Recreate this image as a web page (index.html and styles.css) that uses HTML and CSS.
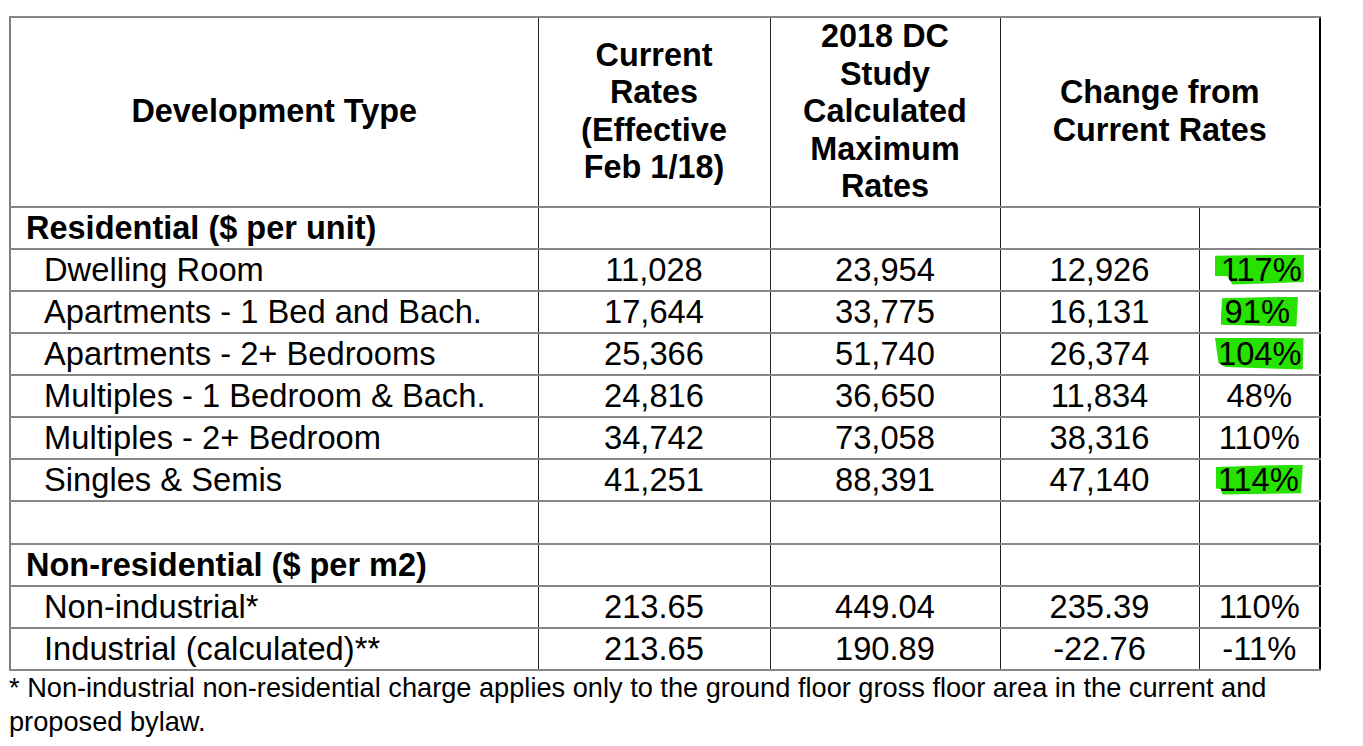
FILE: index.html
```html
<!DOCTYPE html>
<html lang="en">
<head>
<meta charset="utf-8">
<title>DC Rates</title>
<link rel="stylesheet" href="styles.css">
</head>
<body>
<div class="page">
  <table class="rates">
    <colgroup>
      <col class="c1"><col class="c2"><col class="c3"><col class="c4"><col class="c5">
    </colgroup>
    <tr class="hd">
      <th>Development Type</th>
      <th>Current<br>Rates<br>(Effective<br>Feb 1/18)</th>
      <th>2018 DC<br>Study<br>Calculated<br>Maximum<br>Rates</th>
      <th colspan="2">Change from<br>Current Rates</th>
    </tr>
    <tr class="sec">
      <td class="lbl">Residential ($ per unit)</td><td></td><td></td><td></td><td></td>
    </tr>
    <tr>
      <td class="item">Dwelling Room</td><td>11,028</td><td>23,954</td><td>12,926</td><td><span class="hl hl1">117%</span></td>
    </tr>
    <tr>
      <td class="item">Apartments - 1 Bed and Bach.</td><td>17,644</td><td>33,775</td><td>16,131</td><td><span class="hl hl2">91%</span></td>
    </tr>
    <tr>
      <td class="item">Apartments - 2+ Bedrooms</td><td>25,366</td><td>51,740</td><td>26,374</td><td><span class="hl hl3">104%</span></td>
    </tr>
    <tr>
      <td class="item">Multiples - 1 Bedroom &amp; Bach.</td><td>24,816</td><td>36,650</td><td>11,834</td><td>48%</td>
    </tr>
    <tr>
      <td class="item">Multiples - 2+ Bedroom</td><td>34,742</td><td>73,058</td><td>38,316</td><td>110%</td>
    </tr>
    <tr>
      <td class="item">Singles &amp; Semis</td><td>41,251</td><td>88,391</td><td>47,140</td><td><span class="hl hl4">114%</span></td>
    </tr>
    <tr class="blank">
      <td></td><td></td><td></td><td></td><td></td>
    </tr>
    <tr class="sec">
      <td class="lbl">Non-residential ($ per m2)</td><td></td><td></td><td></td><td></td>
    </tr>
    <tr>
      <td class="item">Non-industrial*</td><td>213.65</td><td>449.04</td><td>235.39</td><td>110%</td>
    </tr>
    <tr>
      <td class="item">Industrial (calculated)**</td><td>213.65</td><td>190.89</td><td>-22.76</td><td>-11%</td>
    </tr>
  </table>
  <p class="note">* Non-industrial non-residential charge applies only to the ground floor gross floor area in the current and proposed bylaw.</p>
</div>
</body>
</html>
```
FILE: styles.css
```css
html, body {
  margin: 0;
  background: #ffffff;
}
body {
  font-family: "Liberation Sans", Arial, sans-serif;
  color: #000;
}
.page {
  padding: 16px 0 0 9px;
  width: 1320px;
}
.rates {
  border-collapse: collapse;
  table-layout: fixed;
  width: 1310px;
  font-size: 32.7px;
  border-left: 2px solid #7d7d7d;
  border-right: 2px solid #000;
}
.c1 { width: 528px; }
.c2 { width: 232px; }
.c3 { width: 230px; }
.c4 { width: 199px; }
.c5 { width: 121px; }
.rates th,
.rates td {
  padding: 0;
  border-top: 2px solid #868686;
  border-bottom: 2px solid #868686;
  border-left: 1px solid #222;
  border-right: 1px solid #222;
  text-align: center;
  vertical-align: middle;
  white-space: nowrap;
}
.rates th {
  font-weight: bold;
  font-size: 32.4px;
  line-height: 37.5px;
  height: 187px;
}
.rates td {
  height: 40px;
  line-height: 40px;
}
.rates .lbl {
  text-align: left;
  font-weight: bold;
  font-size: 32.5px;
  padding-left: 15px;
}
.rates .item {
  text-align: left;
  padding-left: 33px;
}
.rates .blank td {
  height: 41px;
}
.hl {
  display: inline-block;
  background: #27e100;
  line-height: 30px;
  padding: 0 3px;
}
.hl1 {
  padding: 0 2px 0 6px;
  clip-path: polygon(0 4%, 100% 0, 100% 92%, 20% 100%, 14% 72%, 0 72%);
}
.hl2 {
  padding: 0 8px 0 4px;
  clip-path: polygon(2% 6%, 100% 0, 98% 100%, 0 94%);
}
.hl3 {
  padding: 1px 2px 1px 3px;
  clip-path: polygon(0 0, 100% 2%, 99% 100%, 12% 92%, 4% 80%);
}
.hl4 {
  padding: 0 4px 0 2px;
  clip-path: polygon(0 8%, 100% 0, 98% 96%, 8% 100%, 6% 82%, 0 80%);
}
.note {
  margin: 0;
  width: 1312px;
  font-size: 27.2px;
  line-height: 34px;
}
```
